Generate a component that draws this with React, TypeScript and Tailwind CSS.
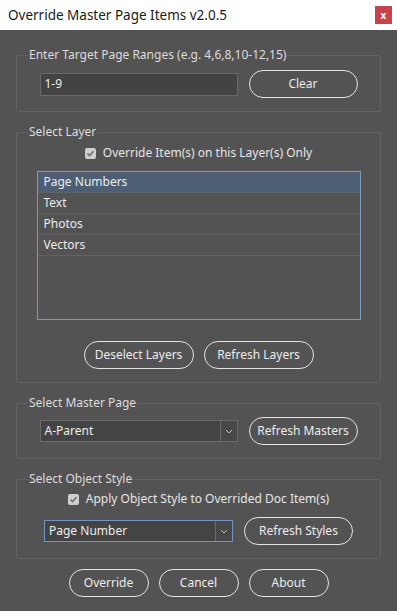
import { ReactNode } from 'react'

const FONT = "font-['Noto_Sans','Open_Sans',sans-serif]"

function Panel({ label, children, className = '' }: { label: string; children: ReactNode; className?: string }) {
  return (
    <fieldset className={`mx-[16px] border border-[#626262] rounded-[2px] ${className}`}>
      <legend className="ml-[11px] px-[1px] text-[12px] leading-[16px] text-[#dcdcdc]">{label}</legend>
      {children}
    </fieldset>
  )
}

function PillButton({ children, w }: { children: ReactNode; w: string }) {
  return (
    <button
      type="button"
      className={`${w} h-[28px] shrink-0 rounded-full border border-[#e4e4e4] text-[12px] text-[#ececec] leading-none`}
    >
      {children}
    </button>
  )
}

function Checkbox({ label }: { label: string }) {
  return (
    <div className="flex h-[16px] items-center justify-center gap-[7px]">
      <span className="flex h-[11px] w-[11px] items-center justify-center rounded-[2px] bg-[#cfcfcf]">
        <svg width="9" height="9" viewBox="0 0 9 9">
          <path d="M1.5 4.6 L3.6 6.6 L7.5 2.2" fill="none" stroke="#6f6f6f" strokeWidth="1.5" />
        </svg>
      </span>
      <span className="text-[12px] text-[#e6e6e6]">{label}</span>
    </div>
  )
}

function Dropdown({ value, w, focused }: { value: string; w: string; focused?: boolean }) {
  return (
    <div
      className={`${w} h-[22px] flex items-stretch border ${focused ? 'border-[#6f96c6]' : 'border-[#6a6a6a]'} bg-[#444444]`}
    >
      <div className="flex-1 flex items-center pl-[4px] text-[12px] text-[#ececec]">{value}</div>
      <div className="w-[17px] flex items-center justify-center border-l border-[#6a6a6a] bg-[#484848]">
        <svg width="8" height="5" viewBox="0 0 8 5">
          <path d="M1 1 L4 4 L7 1" fill="none" stroke="#bdbdbd" strokeWidth="1" />
        </svg>
      </div>
    </div>
  )
}

const LAYERS = ['Page Numbers', 'Text', 'Photos', 'Vectors']

export default function App() {
  return (
    <div className={`${FONT} w-[397px] h-[611px] bg-[#535353] flex flex-col overflow-hidden`}>
      {/* title bar */}
      <div className="h-[30px] bg-white flex items-center justify-between pl-[8px] pr-[5px]">
        <span className="text-[13.5px] text-[#1a1a1a]">Override Master Page Items v2.0.5</span>
        <span className="flex h-[18px] w-[17px] items-center justify-center bg-[#c9434b] text-[10px] font-bold leading-none text-white">
          x
        </span>
      </div>

      <div className="pt-[17px] flex flex-col">
        <Panel label="Enter Target Page Ranges (e.g. 4,6,8,10-12,15)" className="pt-[7px] pb-[13px]">
          <div className="flex items-center justify-center gap-[11px]">
            <div className="w-[198px] h-[23px] flex items-center pl-[4px] bg-[#434343] border border-[#6a6a6a] text-[12px] text-[#ececec]">
              1-9
            </div>
            <PillButton w="w-[109px]">Clear</PillButton>
          </div>
        </Panel>

        <Panel label="Select Layer" className="mt-[12px] pt-[5px] pb-[13px]">
          <Checkbox label="Override Item(s) on this Layer(s) Only" />
          <div className="mx-auto mt-[10px] w-[324px] h-[149px] border border-[#7b9ac0] bg-[#535353]">
            {LAYERS.map((l, i) => (
              <div
                key={l}
                className={`h-[21px] flex items-center pl-[6px] border-b border-[#626262] text-[12px] text-[#ececec] ${i === 0 ? 'bg-[#4c5f75]' : ''}`}
              >
                {l}
              </div>
            ))}
          </div>
          <div className="mt-[21px] flex justify-center gap-[10px]">
            <PillButton w="w-[110px]">Deselect Layers</PillButton>
            <PillButton w="w-[110px]">Refresh Layers</PillButton>
          </div>
        </Panel>

        <Panel label="Select Master Page" className="mt-[12px] pt-[6px] pb-[13px]">
          <div className="flex items-center justify-center gap-[11px]">
            <Dropdown value="A-Parent" w="w-[198px]" />
            <PillButton w="w-[109px]">Refresh Masters</PillButton>
          </div>
        </Panel>

        <Panel label="Select Object Style" className="mt-[12px] pt-[4px] pb-[13px]">
          <Checkbox label="Apply Object Style to Overrided Doc Item(s)" />
          <div className="mt-[10px] flex items-center justify-center gap-[11px]">
            <Dropdown value="Page Number" w="w-[189px]" focused />
            <PillButton w="w-[109px]">Refresh Styles</PillButton>
          </div>
        </Panel>

        <div className="mt-[10px] flex justify-center gap-[10px]">
          <PillButton w="w-[80px]">Override</PillButton>
          <PillButton w="w-[80px]">Cancel</PillButton>
          <PillButton w="w-[80px]">About</PillButton>
        </div>
      </div>
    </div>
  )
}
